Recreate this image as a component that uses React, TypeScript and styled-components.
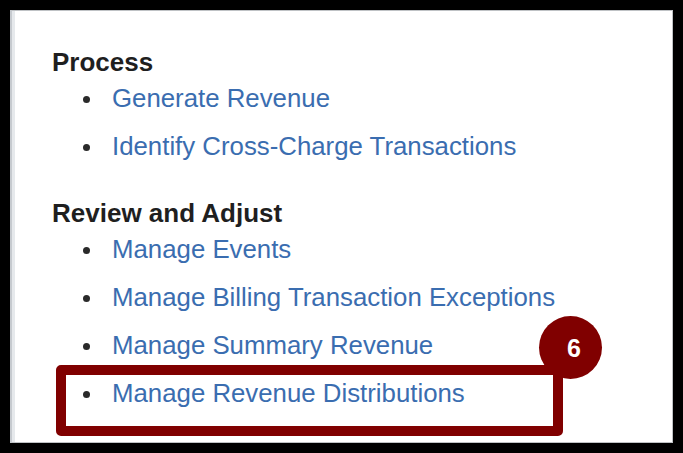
import React from 'react';
import styled, { createGlobalStyle } from 'styled-components';

const GlobalStyle = createGlobalStyle`
  html, body {
    margin: 0;
    padding: 0;
    background: #000;
  }
`;

interface Section {
    title: string;
    items: string[];
    highlight?: number;
}

const sections: Section[] = [
    {
        title: 'Process',
        items: ['Generate Revenue', 'Identify Cross-Charge Transactions'],
    },
    {
        title: 'Review and Adjust',
        items: [
            'Manage Events',
            'Manage Billing Transaction Exceptions',
            'Manage Summary Revenue',
            'Manage Revenue Distributions',
        ],
        highlight: 3,
    },
];

const Frame = styled.div`
  width: 683px;
  height: 453px;
  box-sizing: border-box;
  padding: 10px 10px 10px 10px;
  background: #000;
`;

const Panel = styled.div`
  height: 100%;
  box-sizing: border-box;
  background: #fff;
  border: 1px solid #bfc2c5;
  border-left: 2px solid #c6cacf;
  box-shadow: inset 3px 0 0 #e6e9ec;
  padding: 36px 0 0 40px;
  display: flex;
  flex-direction: column;
  gap: 37px;
  font-family: "Liberation Sans", Arial, sans-serif;
  font-size: 26px;
`;

const Group = styled.div`
  display: flex;
  flex-direction: column;
`;

const Heading = styled.div`
  font-weight: bold;
  color: #1f1f1f;
  line-height: 30px;
  margin-bottom: 6px;
`;

const List = styled.ul`
  list-style: none;
  margin: 0;
  padding: 0 0 0 31px;
  display: flex;
  flex-direction: column;
  gap: 18px;
  font-size: 25.8px;
`;

const Item = styled.li<{ $highlight?: boolean }>`
  position: relative;
  display: flex;
  align-items: flex-start;
  line-height: 30px;
  ${(props) =>
        props.$highlight &&
        `
    width: 507px;
    height: 71px;
    box-sizing: border-box;
    margin: -13px 0 0 -27px;
    padding: 3px 0 18px 17px;
    border: 10px solid #800000;
    border-radius: 5px;
  `}
`;

const Bullet = styled.span`
  flex: none;
  width: 7px;
  height: 7px;
  margin: 13px 22px 0 0;
  border-radius: 50%;
  background: #2a2a2a;
`;

const Link = styled.a`
  color: #3a6db0;
  text-decoration: none;
  cursor: pointer;
`;

const Badge = styled.div`
  position: absolute;
  left: 473px;
  top: -59px;
  width: 63px;
  height: 63px;
  box-sizing: border-box;
  padding-left: 7px;
  border-radius: 50%;
  background: #800000;
  color: #fff;
  font-weight: bold;
  font-size: 25px;
  display: flex;
  align-items: center;
  justify-content: center;
`;

const App = () => {
    return (
        <>
            <GlobalStyle />
            <Frame>
                <Panel>
                    {sections.map((section) => (
                        <Group key={section.title}>
                            <Heading>{section.title}</Heading>
                            <List>
                                {section.items.map((item, i) => (
                                    <Item key={item} $highlight={section.highlight === i}>
                                        <Bullet />
                                        <Link>{item}</Link>
                                        {section.highlight === i && <Badge>6</Badge>}
                                    </Item>
                                ))}
                            </List>
                        </Group>
                    ))}
                </Panel>
            </Frame>
        </>
    );
};

export default App;
